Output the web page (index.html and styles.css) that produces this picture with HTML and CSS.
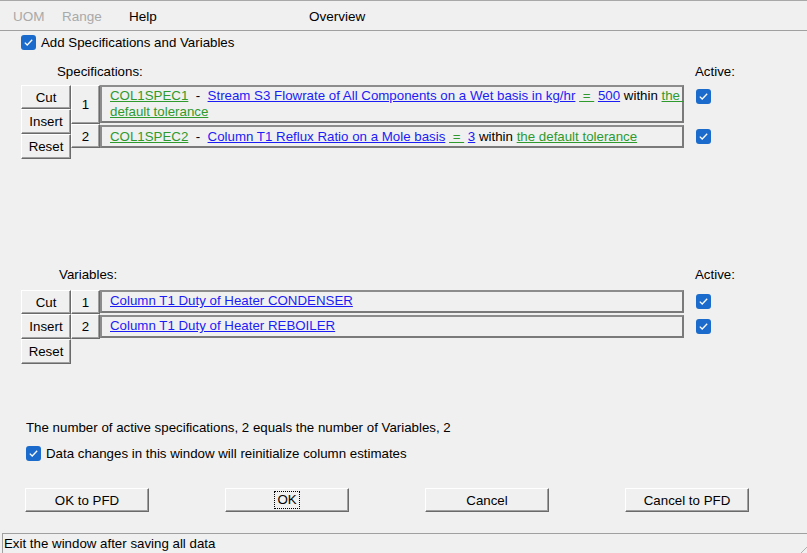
FILE: index.html
```html
<!DOCTYPE html>
<html>
<head>
<meta charset="utf-8">
<link rel="stylesheet" href="styles.css">
</head>
<body>
<div class="window">
  <div class="menubar">
    <span class="mi dis m1">UOM</span>
    <span class="mi dis m2">Range</span>
    <span class="mi m3">Help</span>
    <span class="mi">Overview</span>
  </div>

  <div class="chk-row top-chk">
    <span class="cb"><svg viewBox="0 0 15 15" width="15" height="15"><polyline points="3.8,7.6 6.2,10 11.2,4.8" fill="none" stroke="#fff" stroke-width="1.3"/></svg></span>
    <span>Add Specifications and Variables</span>
  </div>

  <div class="head-row spec-head">
    <span class="lbl">Specifications:</span>
    <span class="act">Active:</span>
  </div>

  <div class="table">
    <div class="btns">
      <button class="btn b1">Cut</button>
      <button class="btn b2">Insert</button>
      <button class="btn b3">Reset</button>
    </div>
    <div class="rows">
      <div class="row r-tall">
        <div class="num">1</div>
        <div class="box">
          <div class="line"><a class="g">COL1SPEC1</a>&nbsp; - &nbsp;<a class="b">Stream S3 Flowrate of All Components on a Wet basis in kg/hr</a> <a class="g">&nbsp;=&nbsp;</a> <a class="b">500</a> within <a class="g">the&nbsp;</a></div>
          <div class="line"><a class="g">default tolerance</a></div>
        </div>
        <span class="cb act-cb"><svg viewBox="0 0 15 15" width="15" height="15"><polyline points="3.8,7.6 6.2,10 11.2,4.8" fill="none" stroke="#fff" stroke-width="1.3"/></svg></span>
      </div>
      <div class="row r-short">
        <div class="num">2</div>
        <div class="box">
          <div class="line"><a class="g">COL1SPEC2</a>&nbsp; - &nbsp;<a class="b">Column T1 Reflux Ratio on a Mole basis</a> <a class="g">&nbsp;=&nbsp;</a> <a class="b">3</a> within <a class="g">the default tolerance</a></div>
        </div>
        <span class="cb act-cb"><svg viewBox="0 0 15 15" width="15" height="15"><polyline points="3.8,7.6 6.2,10 11.2,4.8" fill="none" stroke="#fff" stroke-width="1.3"/></svg></span>
      </div>
    </div>
  </div>

  <div class="head-row var-head">
    <span class="lbl lbl-var">Variables:</span>
    <span class="act">Active:</span>
  </div>

  <div class="table var-table">
    <div class="btns">
      <button class="btn b1">Cut</button>
      <button class="btn b2">Insert</button>
      <button class="btn b3">Reset</button>
    </div>
    <div class="rows">
      <div class="row r-var1">
        <div class="num">1</div>
        <div class="box">
          <div class="line"><a class="b">Column T1 Duty of Heater CONDENSER</a></div>
        </div>
        <span class="cb act-cb"><svg viewBox="0 0 15 15" width="15" height="15"><polyline points="3.8,7.6 6.2,10 11.2,4.8" fill="none" stroke="#fff" stroke-width="1.3"/></svg></span>
      </div>
      <div class="row r-var2">
        <div class="num">2</div>
        <div class="box">
          <div class="line"><a class="b">Column T1 Duty of Heater REBOILER</a></div>
        </div>
        <span class="cb act-cb"><svg viewBox="0 0 15 15" width="15" height="15"><polyline points="3.8,7.6 6.2,10 11.2,4.8" fill="none" stroke="#fff" stroke-width="1.3"/></svg></span>
      </div>
    </div>
  </div>

  <div class="summary">The number of active specifications, 2 equals the number of Variables, 2</div>

  <div class="chk-row bottom-chk">
    <span class="cb"><svg viewBox="0 0 15 15" width="15" height="15"><polyline points="3.8,7.6 6.2,10 11.2,4.8" fill="none" stroke="#fff" stroke-width="1.3"/></svg></span>
    <span>Data changes in this window will reinitialize column estimates</span>
  </div>

  <div class="actions">
    <button class="btn abtn">OK to PFD</button>
    <button class="btn abtn"><span class="focus">OK</span></button>
    <button class="btn abtn">Cancel</button>
    <button class="btn abtn">Cancel to PFD</button>
  </div>

  <div class="status">
    <span class="status-text">Exit the window after saving all data</span>
    <svg class="grip" viewBox="0 0 6 6" width="6" height="6"><line x1="6" y1="0" x2="0" y2="6" stroke="#b0b0b0" stroke-width="1"/></svg>
  </div>
</div>
</body>
</html>
```

FILE: styles.css
```css
* { box-sizing: border-box; }
html, body {
  margin: 0;
  padding: 0;
  background: #f0f0f0;
}
body {
  font-family: "Liberation Sans", Arial, sans-serif;
  font-size: 13.3px;
  color: #000;
}
.window {
  width: 807px;
  height: 553px;
  display: flex;
  flex-direction: column;
  border-top: 1px solid #a8a8a8;
  overflow: hidden;
}
.menubar {
  height: 30px;
  border-bottom: 1px solid #a0a0a0;
  display: flex;
  align-items: center;
  padding: 2px 0 0 13px;
  font-size: 13.5px;
}
.mi { display: inline-block; }
.m1 { width: 49px; }
.m2 { width: 67px; }
.m3 { width: 180px; }
.dis { color: #a9a9a9; }

.chk-row {
  display: flex;
  align-items: center;
  height: 15px;
  line-height: 15px;
  gap: 5px;
}
.top-chk { margin-top: 4px; padding-left: 21px; }
.bottom-chk { margin-top: 10px; padding-left: 26px; }

.cb {
  display: inline-block;
  width: 15px;
  height: 15px;
  border-radius: 3px;
  background: #1a6bcc;
  flex: none;
}
.cb svg { display: block; }

.head-row {
  display: flex;
  height: 16px;
  line-height: 16px;
}
.spec-head { margin-top: 14px; }
.var-head { margin-top: 108px; }
.lbl { width: 695px; padding-left: 57px; }
.lbl-var { padding-left: 59px; }

.table {
  display: flex;
  padding-left: 21px;
  margin-top: 5px;
}
.var-table { margin-top: 7px; }
.btns {
  display: flex;
  flex-direction: column;
  width: 50px;
}
.btn {
  font-family: "Liberation Sans", Arial, sans-serif;
  font-size: 13.3px;
  color: #000;
  background: #f0f0f0;
  border: 1px solid;
  border-color: #ffffff #6a6a6a #6a6a6a #ffffff;
  box-shadow: inset -1px -1px 0 #a0a0a0;
  padding: 0;
  margin: 0;
  display: flex;
  align-items: center;
  justify-content: center;
}
.b1 { height: 24px; }
.b2 { height: 25px; }
.b3 { height: 25px; }

.rows { display: flex; flex-direction: column; }
.row { display: flex; }
.r-tall { height: 39px; }
.r-short { height: 24px; }
.r-var1 { height: 24px; }
.r-var2 { height: 25px; }

.num {
  width: 29px;
  display: flex;
  align-items: center;
  justify-content: center;
  border: 1px solid;
  border-color: #ffffff #6a6a6a #6a6a6a #ffffff;
  box-shadow: inset -1px -1px 0 #a0a0a0;
}
.box {
  width: 584px;
  border: 2px solid;
  border-color: #8c8c8c #7a7a7a #7a7a7a #8c8c8c;
  padding: 1px 0 0 8px;
  background: #f0f0f0;
}
.r-tall .box { height: 38px; }
.r-short .box { padding-top: 2px; margin-top: 1px; }
.r-var1 .box { height: 23px; padding-top: 1px; }
.r-var2 .box { height: 23px; margin-top: 1px; padding-top: 1px; }
.line {
  height: 16px;
  line-height: 16px;
  white-space: nowrap;
}
a { text-decoration: underline; cursor: pointer; }
.g { color: #2e9a2e; }
.b { color: #1c1cf5; }

.act-cb { margin: 4px 0 0 12px; }
.r-short .act-cb { margin-top: 5px; }
.r-var2 .act-cb { margin-top: 5px; }

.summary {
  margin-top: 56px;
  padding-left: 26px;
  height: 16px;
  line-height: 16px;
}

.actions {
  display: flex;
  padding-left: 25px;
  gap: 76px;
  margin-top: 27px;
}
.abtn {
  width: 124px;
  height: 24px;
}
.focus {
  outline: 1px dotted #000;
  outline-offset: 1px;
  padding: 0 1px;
  line-height: 14px;
}

.status {
  margin-top: auto;
  height: 20px;
  margin-left: 2px;
  border-top: 1px solid #a0a0a0;
  border-left: 1px solid #a0a0a0;
  display: flex;
  align-items: center;
  position: relative;
}
.status-text { padding-left: 1px; }
.grip {
  position: absolute;
  right: 0;
  bottom: 0;
}
```
